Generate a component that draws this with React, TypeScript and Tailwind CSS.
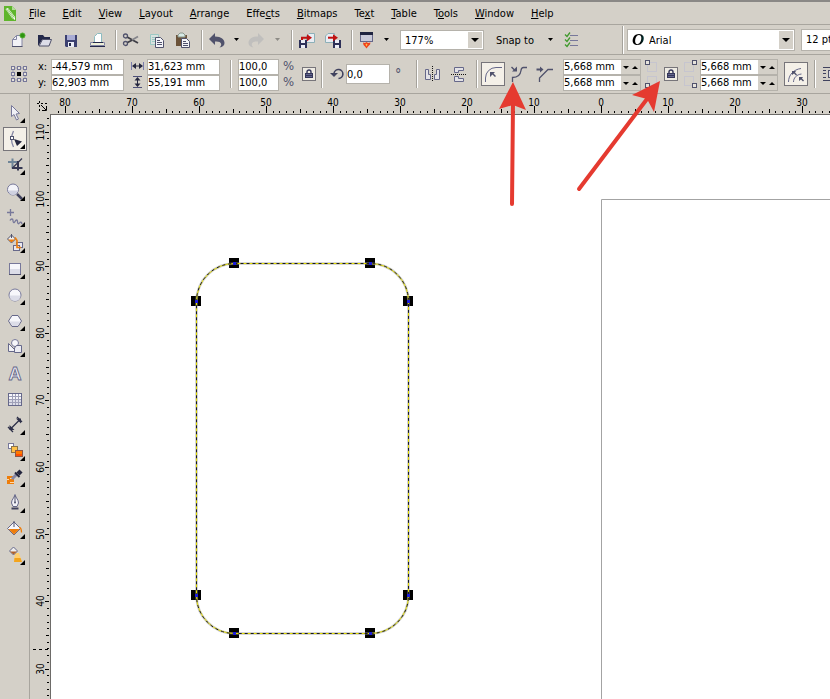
import { useEffect, useState } from 'react';
import type { ReactNode } from 'react';

const INK = '#50526c';
const SOFT = '#8486a4';
const ORANGE = '#ee7d0a';

function Icon({ children, w = 18, h = 18 }: { children: ReactNode; w?: number; h?: number }) {
  return <svg width={w} height={h} viewBox={`0 0 ${w} ${h}`} fill="none" stroke={INK} className="block shrink-0" aria-hidden="true">{children}</svg>;
}

function Sep({ tall = false }: { tall?: boolean }) {
  return <span className={`ml-1.5 w-[2px] shrink-0 border-l border-r border-l-[#a5a29b] border-r-white ${tall ? 'h-7' : 'h-5'}`} />;
}

function Bar({ label, children }: { label: string; children: ReactNode }) {
  return <button aria-label={label} className="flex w-[26px] shrink-0 items-center justify-center">{children}</button>;
}

function Drop({ label, dim = false }: { label: string; dim?: boolean }) {
  return (
    <button aria-label={label} className="flex w-[15px] shrink-0 items-center justify-center">
      <svg width="5" height="3" viewBox="0 0 5 3" fill={dim ? '#8d8b85' : '#000'}><path d="M0 0h5L2.5 3z" /></svg>
    </button>
  );
}

function Field({ label, value, className }: { label: string; value: string; className: string }) {
  const [v, setV] = useState(value);
  return <input aria-label={label} value={v} onChange={(e) => setV(e.target.value)} className={`block shrink-0 border border-[#b5b2ab] bg-white outline-none ${className}`} />;
}

function Spin({ label }: { label: string }) {
  return (
    <div className="flex h-4 w-[78px] border border-[#b5b2ab] bg-white">
      <Field label={label} value="5,668 mm" className="h-3.5 w-[57px] border-0" />
      <div className="flex flex-1 items-center justify-between bg-[#d4d0c8] px-0.5">
        <button aria-label={`Decrease ${label}`}><svg width="6" height="3" className="block"><path d="M0 0h6L3 3z" /></svg></button>
        <button aria-label={`Increase ${label}`}><svg width="6" height="3" className="block"><path d="M0 3h6L3 0z" /></svg></button>
      </div>
    </div>
  );
}

function Lock({ label }: { label: string }) {
  return (
    <button aria-label={label} className="flex size-[14px] shrink-0 items-center justify-center border border-[#77757a] bg-[#eeebe3]">
      <svg width="10" height="10" viewBox="0 0 10 10" fill="none">
        <path d="M3 5V3a2 2 0 0 1 4 0v2" stroke="#35375a" strokeWidth="1.4" />
        <rect x="1" y="4" width="8" height="5" fill="#35375a" />
        <path d="M2 5.5h6M2 7.5h6" stroke="#8486b4" strokeWidth=".6" />
      </svg>
    </button>
  );
}

function Corners({ side }: { side: 'left' | 'right' }) {
  const x = side === 'left' ? 0.5 : 8.5;
  const b = side === 'left' ? 2.5 : 0.5;
  return (
    <Icon w={13} h={28}>
      <rect x={b} y="2.5" width="9" height="9" stroke="#c6c5cf" />
      <rect x={b} y="16.5" width="9" height="9" stroke="#c6c5cf" />
      <rect x={x} y=".5" width="4" height="4" fill="#e6e3dc" />
      <rect x={x} y="23.5" width="4" height="4" fill="#e6e3dc" />
    </Icon>
  );
}

const MENU: [string, number][] = [
  ['File', 0], ['Edit', 0], ['View', 0], ['Layout', 0], ['Arrange', 0], ['Effects', 4],
  ['Bitmaps', 0], ['Text', 2], ['Table', 0], ['Tools', 1], ['Window', 0], ['Help', 0],
];

function MenuBar() {
  return (
    <nav className="flex h-6 items-center border-t-2 border-[#8a8886]">
      <svg width="13" height="17" viewBox="0 0 13 17" className="ml-1 shrink-0" aria-hidden="true">
        <path d="M0 1h8l4 4v11H0z" fill="#5fb52c" />
        <path d="M8 1v4h4z" fill="#b4dd98" />
        <path d="M1.5 4L4 3l7 9v3L8 13z" fill="#fff" />
        <path d="M2.500 4.500l7 9M3.800 4l6.500 8.500" stroke="#5fb52c" strokeWidth=".7" />
      </svg>
      <div className="ml-3 flex gap-[17px] pt-0.5">
        {MENU.map(([name, i]) => (
          <button key={name}>{name.slice(0, i)}<span className="underline underline-offset-1">{name[i]}</span>{name.slice(i + 1)}</button>
        ))}
      </div>
    </nav>
  );
}

function StandardBar() {
  return (
    <div className="flex h-[30px] items-center overflow-hidden border-t border-[#a8a59e] pl-[5px]">
      <Bar label="New">
        <Icon>
          <path d="M3.5 8.5l4-4H13v11H3.5z" fill="#f2f2f6" stroke={SOFT} />
          <path d="M3.5 8.5h4v-4" stroke={SOFT} />
          <path d="M3 15.5h10.500" />
          <circle cx="13.500" cy="4.500" r="2.500" fill="#2f9410" stroke="#4fae30" />
        </Icon>
      </Bar>
      <Bar label="Open">
        <Icon>
          <path d="M3 15V4h5l1.500 2H15v3H7z" fill="#24294a" stroke="none" />
          <path d="M4 15l3.500-6.500h9L14 15z" fill="#dcdde8" />
        </Icon>
      </Bar>
      <Bar label="Save">
        <Icon>
          <path d="M4 4h12v12H5l-1-1z" fill="#3c4070" stroke="none" />
          <path d="M6 4h8v5H6z" fill="#a9acd4" stroke="none" />
          <path d="M7 11h6v5H7z" fill="#eceef6" stroke="none" />
          <path d="M8 12h2v3H8z" fill="#24294a" stroke="none" />
        </Icon>
      </Bar>
      <Bar label="Print">
        <Icon>
          <path d="M3.5 11.5h14v3h-14z" fill="#eef0d8" stroke={SOFT} />
          <path d="M7.5 11.5v-6l3-3h4v9z" fill="#fff" stroke="#8cbcc0" />
          <path d="M6 11.5h10M3 15.5h15" stroke="#24294a" />
        </Icon>
      </Bar>
      <Sep />
      <Bar label="Cut">
        <Icon>
          <circle cx="4.500" cy="5" r="2" strokeWidth="1.300" />
          <circle cx="4.500" cy="12.500" r="2" strokeWidth="1.300" />
          <path d="M6.500 6.200L17 12M6.500 11.500l5-2.500" stroke="#3e3e46" strokeWidth="1.800" />
          <path d="M11 9l6-3.500" stroke="#85858b" strokeWidth="1.800" />
        </Icon>
      </Bar>
      <Bar label="Copy">
        <Icon>
          <path d="M3.500 3.500h8v10h-8z" fill="#d9e2df" stroke="#9cc9c4" />
          <path d="M5 6.500h5M5 8.500h5M5 10.500h3" stroke="#9cc9c4" />
          <path d="M8.500 6.500h5l3 3v7h-8z" fill="#f6f6fa" />
          <path d="M10 9.500h3M10 11.500h5M10 13.500h5" />
        </Icon>
      </Bar>
      <Bar label="Paste">
        <Icon>
          <path d="M3 4h11v11H3z" fill="#6b5238" stroke="none" />
          <path d="M5 6V4l2-2h3l2 2v2z" fill="#d7ebe6" stroke="#8d988f" />
          <path d="M8.500 7.500h5l3 3v6h-8z" fill="#f6f6fa" />
          <path d="M10 10.500h3M10 12.500h5M10 14.500h5" />
        </Icon>
      </Bar>
      <Sep />
      <Bar label="Undo">
        <Icon>
          <path d="M2 8l6-6v3.500c6.500 0 9.500 3 9.500 6.500 0 2.500-2 4-5 4.500 1.500-1.500 2-2.500 1.500-4-.6-1.600-2.500-2.300-6-2V14z" fill={INK} stroke="none" />
        </Icon>
      </Bar>
      <Drop label="Undo list" />
      <Bar label="Redo">
        <Icon>
          <path d="M16 8l-6-6v3.500C3.500 5.500.5 8.500.5 12c0 2.500 2 4 5 4.500-1.500-1.500-2-2.500-1.500-4 .6-1.600 2.500-2.300 6-2V14z" fill="#c0bfbd" stroke="none" />
        </Icon>
      </Bar>
      <Drop label="Redo list" dim />
      <Sep />
      <Bar label="Import">
        <Icon>
          <path d="M9.500 11.500V5L12 2.500h5.500v9z" fill="#e9ecf2" stroke="#8cb0b8" />
          <path d="M2 9h8v8H2z" fill="#2d3058" stroke="none" />
          <path d="M4 9h4v3H4zM4 14h4v3H4z" fill="#eceef6" stroke="none" />
          <path d="M5 9V6.700h6" stroke="#c01212" strokeWidth="2" />
          <path d="M10 3.200l5 3.500-5 3.500z" fill="#c01212" stroke="none" />
        </Icon>
      </Bar>
      <Bar label="Export">
        <Icon>
          <path d="M2.500 11.500V5L5 2.500h6.500v9z" fill="#e9ecf2" stroke="#8cb0b8" />
          <path d="M10 9h8v8h-8z" fill="#2d3058" stroke="none" />
          <path d="M12 9h4v3h-4zM12 14h4v3h-4z" fill="#eceef6" stroke="none" />
          <path d="M5 6.700h6" stroke="#c01212" strokeWidth="2" />
          <path d="M10 3.200l5 3.500-5 3.500z" fill="#c01212" stroke="none" />
        </Icon>
      </Bar>
      <Sep />
      <Bar label="Application launcher">
        <Icon>
          <rect x="3.500" y="1.500" width="12" height="9" fill="#c9cad9" stroke="#66688a" />
          <path d="M3 1h13v3H3z" fill="#1f2440" stroke="none" />
          <path d="M6 11.500l2 .5 1.500-1 1.500 1 2.500-.5-.5 2-2 2-1.500 2-1.500-2-1.500-1.500z" fill="#f0401a" stroke="none" />
          <path d="M8.500 13.500l1-1 1 1-1 2z" fill="#ffc24a" stroke="none" />
        </Icon>
      </Bar>
      <Drop label="Launcher list" />
      <div className="relative ml-1.5 h-5 w-[84px] shrink-0 border border-[#b5b2ab] bg-white">
        <select aria-label="Zoom level" defaultValue="177%" className="h-full w-full appearance-none pt-0.5 pl-1 outline-none">
          <option>100%</option>
          <option>177%</option>
        </select>
        <span className="pointer-events-none absolute inset-y-px right-px flex bg-[#d4d0c8]">
          <svg width="14" height="16" viewBox="0 0 14 16"><path d="M3 6h8l-4 4z" /></svg>
        </span>
      </div>
      <button className="ml-3 shrink-0 pt-0.5">Snap to</button>
      <span className="ml-[9px] flex"><Drop label="Snap list" /></span>
      <Bar label="Options">
        <Icon>
          <path d="M8 4.500h8M8 9.500h8M8 14.500h8" stroke="#77789a" />
          <path d="M3 3.500l2 2 3-4M3 8.500l2 2 3-4M3 13.500l2 2 3-4" stroke="#3f9a2c" strokeWidth="1.300" />
        </Icon>
      </Bar>
      <span className="ml-8 flex"><Sep tall /></span>
      <div className="relative ml-[3px] flex h-[22px] w-[168px] shrink-0 items-center border border-[#b5b2ab] bg-white">
        <span className="ml-1 w-[17px] bg-linear-to-r from-black from-40% to-[#00a0a0] bg-clip-text font-['Liberation_Serif',serif] text-[17px] leading-4 font-bold text-transparent italic">O</span>
        <select aria-label="Font" defaultValue="Arial" className="h-full flex-1 appearance-none pt-0.5 outline-none">
          <option>Arial</option>
          <option>Tahoma</option>
        </select>
        <span className="pointer-events-none absolute inset-y-px right-px flex bg-[#d4d0c8]">
          <svg width="14" height="18" viewBox="0 0 14 18"><path d="M3 7h8l-4 4z" /></svg>
        </span>
      </div>
      <select aria-label="Font size" defaultValue="12 pt" className="ml-1.5 h-[22px] w-20 shrink-0 appearance-none border border-[#b5b2ab] bg-white pl-1 outline-none">
        <option>12 pt</option>
        <option>14 pt</option>
      </select>
    </div>
  );
}

function PropertyBar() {
  return (
    <div className="flex h-[39px] items-center overflow-hidden border-t border-[#a8a59e] pl-2.5">
      <Icon>
        <path d="M3 3h12v12H3z" stroke="#9a9bb0" />
        {[1.5, 7.5, 13.5].map((x) => [1.5, 7.5, 13.5].map((y) => (
          <rect key={`${x} ${y}`} x={x} y={y} width="3" height="3" fill={x === 7.5 && y === 7.5 ? '#000' : '#e6e3dc'} stroke={x === 7.5 && y === 7.5 ? '#000' : '#77789a'} />
        )))}
      </Icon>
      <div className="mt-0.5 ml-2.5 flex w-[13px] shrink-0 flex-col leading-4"><span>x:</span><span>y:</span></div>
      <div className="mt-0.5 flex flex-col">
        <Field label="X position" value="-44,579 mm" className="h-4 w-[73px]" />
        <Field label="Y position" value="62,903 mm" className="h-4 w-[73px]" />
      </div>
      <div className="ml-1.5 flex shrink-0 flex-col">
        <Icon w={15} h={16}>
          <path d="M1.500 4v8M13.500 4v8" stroke="#7a7cab" />
          <path d="M3 8h9" stroke="#24263e" />
          <path d="M2 8l4-3v6zM13 8L9 5v6z" fill="#24263e" stroke="none" />
        </Icon>
        <Icon w={15} h={16}>
          <path d="M3 2.500h9M3 13.500h9" stroke="#4d4f78" />
          <path d="M7.500 4v8" stroke="#24263e" />
          <path d="M7.500 3l3 3.500h-6zM7.500 13l3-3.500h-6z" fill="#24263e" stroke="none" />
        </Icon>
      </div>
      <div className="mt-0.5 ml-0.5 flex flex-col">
        <Field label="Width" value="31,623 mm" className="h-4 w-[73px]" />
        <Field label="Height" value="55,191 mm" className="h-4 w-[73px]" />
      </div>
      <span className="ml-1 flex"><Sep tall /></span>
      <div className="mt-0.5 ml-1.5 flex flex-col">
        <Field label="Scale X" value="100,0" className="h-4 w-[41px]" />
        <Field label="Scale Y" value="100,0" className="h-4 w-[41px]" />
      </div>
      <div className="ml-1 flex w-3 shrink-0 flex-col text-[13px] leading-4 text-[#50526c]"><span>%</span><span>%</span></div>
      <span className="ml-[7px] flex"><Lock label="Lock ratio" /></span>
      <span className="-ml-px flex"><Sep tall /></span>
      <span className="ml-[7px] flex">
        <Icon w={15} h={18}>
          <path d="M4 8a4.500 4.500 0 1 1 4.500 5.500" stroke="#40425e" strokeWidth="1.600" />
          <path d="M0 8h8l-4 4z" fill="#40425e" stroke="none" />
        </Icon>
      </span>
      <span className="ml-px"><Field label="Rotation angle" value="0,0" className="h-5 w-11" /></span>
      <span className="ml-[5px] w-[21px] shrink-0 text-sm text-[#50526c]">°</span>
      <span className="-ml-1.5 flex"><Sep tall /></span>
      <span className="ml-0.5 flex">
        <Bar label="Mirror horizontally">
          <Icon>
            <path d="M1.500 4.500h3v5h2v5h-5zM15.500 4.500h-3v5h-2v5h5z" fill="#e3e2e6" stroke="#66688a" />
            <path d="M8.500 1v16" stroke="#111" strokeDasharray="1 1" />
          </Icon>
        </Bar>
        <Bar label="Mirror vertically">
          <Icon>
            <path d="M4.500 2.500h9v3h-5v2h-4zM4.500 16.500h9v-3h-5v-2h-4z" fill="#e3e2e6" stroke="#66688a" />
            <path d="M1 9.500h16" stroke="#111" strokeDasharray="1 1" />
          </Icon>
        </Bar>
      </span>
      <span className="-ml-0.5 flex"><Sep tall /></span>
      <button aria-label="Round corner" className="ml-[3px] flex size-6 shrink-0 items-center justify-center border border-[#77757a] bg-[#f4f0e8]">
        <Icon>
          <path d="M1.500 17v-4A10.500 10.500 0 0 1 12 2.500h6" stroke="#66688a" />
          <path d="M6 7h5L9.500 8.500 12 11l-1 1-2.500-2.500L6 12z" fill={INK} stroke="none" />
        </Icon>
      </button>
      <Bar label="Scalloped corner">
        <Icon>
          <path d="M3.500 17v-4.500c5 0 8-3 8.500-7 .2-2 1-3 2.500-3H18" strokeWidth="1.300" />
          <path d="M8 6.500H3L4.500 5 2 2.500l1-1L5.500 4 8 1.500z" fill={INK} stroke="none" />
        </Icon>
      </Bar>
      <Bar label="Chamfered corner">
        <Icon>
          <path d="M4.500 17v-4L13 4.500h5" strokeWidth="1.300" />
          <path d="M1.500 3.500H5v-2L8.500 4.500 5 7.500v-2H1.500z" fill={INK} stroke="none" />
        </Icon>
      </Bar>
      <div className="mt-0.5 ml-1.5 flex shrink-0 flex-col">
        <Spin label="top left radius" />
        <Spin label="bottom left radius" />
      </div>
      <span className="ml-1 flex"><Corners side="left" /></span>
      <span className="ml-1.5 flex"><Lock label="Edit corners together" /></span>
      <span className="ml-1.5 flex"><Corners side="right" /></span>
      <div className="mt-0.5 ml-[3px] flex shrink-0 flex-col">
        <Spin label="top right radius" />
        <Spin label="bottom right radius" />
      </div>
      <button aria-label="Relative corner scaling" className="ml-1.5 flex size-6 shrink-0 items-center justify-center border border-[#77757a] bg-[#f4f0e8]">
        <Icon>
          <path d="M1.500 17c0-7 5-12.500 12.500-13.500M6.500 17c0-4 3-7.500 8-8" stroke="#66688a" />
          <path d="M5 6h4L8 7.500l2 2-1 1-2-2L5 10zM12 12h4l-1 1.500 2 2-1 1-2-2-2 1.500z" fill={INK} stroke="none" />
        </Icon>
      </button>
      <Sep tall />
      <span className="ml-1.5 flex">
        <Icon>
          <path d="M1 2.500h16M1 15.500h16M1 5.500h3M1 8.500h3M1 12.500h3" stroke="#40425e" />
          <rect x="6.500" y="5.500" width="7" height="7" fill="#d9d9e2" />
        </Icon>
      </span>
    </div>
  );
}

const TOOLS: { name: string; flyout: boolean; art: ReactNode }[] = [
  { name: 'Pick', flyout: true, art: <path d="M5.500 1.500v11L8 10.500l2.500 5.500 2-1-2.500-5 3.500-.5z" fill="#f0f0f6" stroke="#77789a" /> },
  {
    name: 'Shape', flyout: true, art: <>
      <path d="M7.500 1C5 6 5 12 7.500 17" stroke={SOFT} strokeWidth="1.300" />
      <rect x="4.500" y="6.500" width="3" height="3" fill="#fff" />
      <path d="M8 9l8 2.500-5 4.500z" fill="#24263e" stroke="none" />
    </>,
  },
  {
    name: 'Crop', flyout: true, art: <>
      <path d="M2 6h9M6.500 2.500v10" stroke="#6f8598" strokeWidth="2" />
      <path d="M12 5v9.500M6 12h10.500" stroke="#363852" strokeWidth="2" />
      <path d="M16 2.500L7 11.500" stroke="#363852" strokeWidth="1.200" />
    </>,
  },
  {
    name: 'Zoom', flyout: true, art: <>
      <path d="M11 12l5 5" stroke="#40425e" strokeWidth="2.500" />
      <circle cx="7" cy="7.500" r="5.500" fill="#f4f4f9" stroke="#77789a" />
      <path d="M2.500 8.500h9a4.500 4.500 0 0 1-9 0z" fill="#cfd1e0" stroke="none" />
    </>,
  },
  {
    name: 'Freehand', flyout: true, art: <>
      <path d="M4.500 1v7M1 4.500h7" stroke="#77789a" strokeWidth="1.300" />
      <path d="M4 12.500c1-2 3-2 3 0s1 3 2 1 2.500-2 2.500 0 1 3 2 1.500 2-1 2.500 1" stroke="#77789a" strokeWidth="1.300" />
    </>,
  },
  {
    name: 'Smart fill', flyout: true, art: <>
      <path d="M1.500 5l4-4 4 4-4 4z" fill="#eee" />
      <path d="M2 5.500h7L5.500 8.500z" fill={ORANGE} stroke="none" />
      <path d="M5.500 4V0" />
      <rect x="10.500" y="8.500" width="6" height="5" fill="#e9e9f0" stroke="#66688a" />
      <rect x="7.500" y="11.500" width="6" height="5" fill="#e9e9f0" stroke="#66688a" />
      <path d="M9 3.500l2 3v7h4" stroke={ORANGE} strokeWidth="1.600" />
    </>,
  },
  { name: 'Rectangle', flyout: true, art: <><rect x="3.500" y="3.500" width="11" height="11" fill="#f7f7fb" stroke="#77789a" /><path d="M4 9h10v5H4z" fill="#dcdde8" stroke="none" /><path d="M3 14.500h12" /></> },
  { name: 'Ellipse', flyout: true, art: <><circle cx="9" cy="9" r="6" fill="#f7f7fb" stroke="#77789a" /><path d="M3.500 9.500h11a5.500 5.500 0 0 1-11 0z" fill="#dcdde8" stroke="none" /></> },
  { name: 'Polygon', flyout: true, art: <><path d="M2.500 9l3.500-5.500h6L15.500 9 12 14.500H6z" fill="#f7f7fb" stroke="#66688a" /><path d="M3.500 9.500h11l-3 4.500h-5z" fill="#dcdde8" stroke="none" /></> },
  {
    name: 'Basic shapes', flyout: true, art: <>
      <path d="M2.500 5.500v8h8z" fill="#f2f2f7" stroke="#66688a" />
      <circle cx="9" cy="5" r="3.500" fill="#f7f7fb" stroke="#77789a" />
      <path d="M8.500 10l2-2.500h5v7h-7z" fill="#ececf3" stroke="#66688a" />
    </>,
  },
  { name: 'Text', flyout: false, art: <text x="9" y="15.500" textAnchor="middle" fontSize="18" fontWeight="700" fontFamily="Liberation Sans, sans-serif" fill="#f0f0f6" stroke="#66688a" strokeWidth=".9">A</text> },
  {
    name: 'Table', flyout: false, art: <>
      <rect x="2.500" y="3.500" width="13" height="12" fill="#f7f7fb" stroke="#66688a" />
      <path d="M3 10h12v5H3z" fill="#dcdde8" stroke="none" />
      <path d="M3 6.500h12M3 9.500h12M3 12.500h12M6.500 4v11M9.500 4v11M12.500 4v11" stroke="#9fa0b8" />
    </>,
  },
  {
    name: 'Dimension', flyout: true, art: <>
      <path d="M5 12.500L13.500 4M2 11l5 5M11 1l5 5" stroke="#2d2f48" strokeWidth="1.300" />
      <path d="M3.500 14V9l5 5zM15 2.500v5l-5-5z" fill="#2d2f48" stroke="none" />
    </>,
  },
  {
    name: 'Blend', flyout: true, art: <>
      <rect x="2.500" y="1.500" width="5" height="5" fill="#fff" stroke="#77789a" />
      <rect x="5.500" y="4.500" width="6" height="6" fill="#ffc24a" stroke="#8c7448" />
      <rect x="9.500" y="8.500" width="7" height="6" fill="#ff7a00" stroke="#8c5848" />
      <path d="M10 12h6v2h-6z" fill="#ff4d00" stroke="none" />
    </>,
  },
  {
    name: 'Eyedropper', flyout: true, art: <>
      <path d="M1 8h7v8H1z" fill={ORANGE} stroke="none" />
      <path d="M1 11.500h2M4 10.500h2M4 14.500h4" stroke="#ffd9a8" />
      <path d="M6 11l5-5" stroke="#8486a4" strokeWidth="3" />
      <path d="M9 4.500l4.500 4.500" stroke="#24263e" strokeWidth="2" />
      <path d="M12 6l3-3" stroke="#24263e" strokeWidth="4.500" />
    </>,
  },
  {
    name: 'Outline pen', flyout: true, art: <>
      <path d="M9 .5c-1 4-3.500 5-3.500 8.500L7 12.500h4L12.500 9C12.500 5.500 10 4.500 9 .5z" fill="#f2f2f7" stroke="#66688a" />
      <path d="M9 2v6" />
      <circle cx="9" cy="8.500" r="1" fill={INK} stroke="none" />
      <path d="M5.500 14.500h7" stroke="#40425e" strokeWidth="2" />
    </>,
  },
  {
    name: 'Fill', flyout: true, art: <>
      <path d="M1.500 8.500L8 2l6.500 6.500L8 15z" fill="#f7f7fb" stroke="#66688a" />
      <path d="M2.500 9h11L8 14.500z" fill={ORANGE} stroke="none" />
      <path d="M8 7V1" />
      <path d="M13 7.500c2 0 2.500 1.500 2.500 5" stroke={ORANGE} strokeWidth="1.300" />
    </>,
  },
  {
    name: 'Interactive fill', flyout: true, art: <>
      <path d="M9 7h4l3 9H8z" fill="#ffcf70" stroke="none" />
      <path d="M8.500 12h6l1.500 4H8z" fill="#f3a41c" stroke="none" />
      <path d="M3.500 5l4-4 4 4-4 4z" fill="#eee" stroke="#66688a" />
      <path d="M4 5.500h7L7.500 8.500z" fill="#b0622c" stroke="none" />
    </>,
  },
];

function Toolbox() {
  const [active, setActive] = useState('Shape');
  return (
    <aside className="flex w-[30px] shrink-0 flex-col items-center border-r border-[#a8a59e] pt-[7px]">
      {TOOLS.map(({ name, flyout, art }) => (
        <button key={name} aria-label={name} onClick={() => setActive(name)}
          className={`relative mb-0.5 flex size-6 items-center justify-center border ${active === name ? 'border-[#77757a] bg-[#f4f0e8]' : 'border-transparent'}`}>
          <Icon>{art}</Icon>
          {flyout && <svg width="5" height="5" className="absolute right-px bottom-px"><path d="M5 0v5H0z" /></svg>}
        </button>
      ))}
    </aside>
  );
}

// pixels per millimetre at the current zoom
const STEP_X = 6.7;
const STEP_Y = 6.713;
const ORIGIN_X = 551;
const ORIGIN_Y = 756;

function useWindowSize() {
  const [size, setSize] = useState({ w: window.innerWidth, h: window.innerHeight });
  useEffect(() => {
    const update = () => setSize({ w: window.innerWidth, h: window.innerHeight });
    window.addEventListener('resize', update);
    return () => window.removeEventListener('resize', update);
  }, []);
  return size;
}

function HorizontalRuler() {
  const { w } = useWindowSize();
  const last = Math.floor((w - 50 - ORIGIN_X) / STEP_X);
  const ticks = Array.from({ length: Math.max(0, last + 82) }, (_, i) => i - 81);
  const at = (n: number) => Math.round(ORIGIN_X + n * STEP_X);
  return (
    <svg className="block h-5 min-w-0 flex-1" aria-hidden="true">
      {ticks.map((n) => {
        const len = n % 10 === 0 ? 7 : n % 5 === 0 ? 4 : 2;
        return <rect key={n} x={at(n)} y={19 - len} width="1" height={len} />;
      })}
      {ticks.filter((n) => n % 10 === 0 && at(n) < w - 62).map((n) => (
        <text key={n} x={at(n)} y="12" fontSize="10" textAnchor="middle">{Math.abs(n)}</text>
      ))}
    </svg>
  );
}

function VerticalRuler() {
  const { h } = useWindowSize();
  const first = Math.ceil((ORIGIN_Y - (h - 114)) / STEP_Y);
  const ticks = Array.from({ length: Math.max(0, 113 - first) }, (_, i) => 112 - i);
  const at = (n: number) => Math.round(ORIGIN_Y - n * STEP_Y);
  return (
    <svg className="block w-5 shrink-0" aria-hidden="true">
      {ticks.map((n) => {
        const len = n % 10 === 0 ? 4 : n % 5 === 0 ? 3 : 2;
        return <rect key={n} x={19 - len} y={at(n)} width={len} height="1" />;
      })}
      {ticks.filter((n) => n % 10 === 0 && at(n) < h - 126).map((n) => (
        <text key={n} x="14" y={at(n)} fontSize="10" textAnchor="middle" transform={`rotate(-90 14 ${at(n)})`}>{Math.abs(n)}</text>
      ))}
      <path d="M3 535.500h16" stroke="#000" strokeDasharray="3 3" />
    </svg>
  );
}

const NODES = [[178, 143], [314, 143], [140, 181], [352, 181], [140, 475], [352, 475], [178, 513], [314, 513]];

function Canvas() {
  return (
    <svg className="block min-w-0 flex-1 border-t border-l border-[#6d6b68] bg-white" role="img" aria-label="Drawing with a rounded rectangle">
      <path d="M550.500 3000V84.500H3000" fill="none" stroke="#a3a3a3" />
      {NODES.map(([x, y]) => <rect key={`${x} ${y}`} x={x} y={y} width="10" height="10" />)}
      <g fill="none">
        <rect x="145.500" y="148.500" width="212" height="370" rx="38" stroke="#9a9a9a" strokeOpacity=".55" strokeWidth="2.500" />
        <rect x="145.500" y="148.500" width="212" height="370" rx="38" stroke="#e6e000" />
        <rect x="145.500" y="148.500" width="212" height="370" rx="38" stroke="#15152a" strokeDasharray="3 3" />
      </g>
      {NODES.map(([x, y]) => <rect key={`${x} ${y}`} x={x + 4} y={y + 4} width="3" height="3" fill="#1c1cd8" />)}
    </svg>
  );
}

export default function App() {
  return (
    <div className="relative flex min-h-screen flex-col overflow-hidden bg-[#d4d0c8] font-['DejaVu_Sans_Condensed','DejaVu_Sans',sans-serif] text-[11px] leading-4 text-black">
      <MenuBar />
      <StandardBar />
      <PropertyBar />
      <main className="flex flex-1 border-t border-[#a8a59e]">
        <Toolbox />
        <div className="flex min-w-0 flex-1 flex-col">
          <div className="flex">
            <svg width="20" height="20" viewBox="0 0 20 20" fill="none" stroke="#000" className="block shrink-0" aria-hidden="true">
              <path d="M7 9.500h10M9.500 7v10" strokeDasharray="2 2" />
              <path d="M11 11l5 5M16.500 12v4.500H12" />
            </svg>
            <HorizontalRuler />
          </div>
          <div className="flex flex-1">
            <VerticalRuler />
            <Canvas />
          </div>
        </div>
      </main>
      <svg className="pointer-events-none absolute inset-0 h-full w-full" fill="#e53a30" aria-hidden="true">
        <path d="M512 204L513 103M579 189L647 99" stroke="#e53a30" strokeWidth="4" strokeLinecap="round" />
        <path d="M513 82L499 109l14-4 13 5zM660 81l-28 14 15 4 7 13z" />
      </svg>
    </div>
  );
}
